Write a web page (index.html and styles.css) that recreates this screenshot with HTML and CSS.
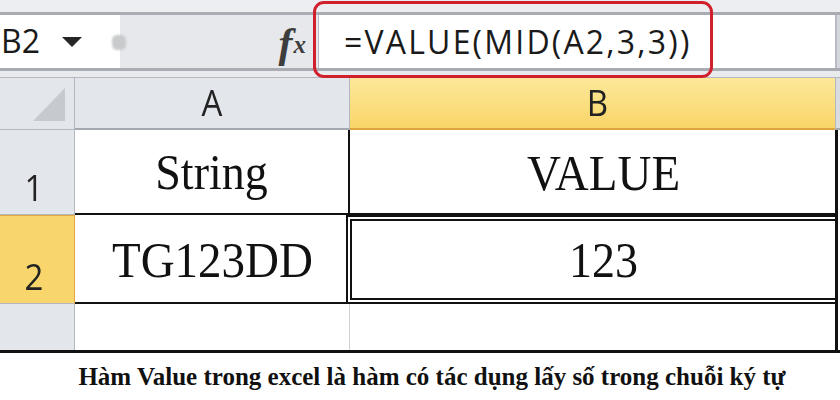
FILE: index.html
```html
<!DOCTYPE html>
<html lang="vi">
<head>
<meta charset="utf-8">
<title>Hàm VALUE</title>
<link rel="stylesheet" href="styles.css">
</head>
<body>
<div class="app">
  <div class="chrome-top"></div>

  <div class="formula-row">
    <div class="name-box">
      <span class="cell-ref">B2</span>
      <span class="caret"></span>
    </div>
    <div class="grip"></div>
    <div class="fx-area">
      <span class="fx"><span class="fx-f">f</span><span class="fx-x">x</span></span>
    </div>
    <div class="formula">=VALUE(MID(A2,3,3))</div>
    <div class="formula-end"></div>
  </div>
  <div class="formula-foot"></div>

  <div class="sheet">
    <!-- header row -->
    <div class="corner"><span class="corner-tri"></span></div>
    <div class="col-head"><span class="tall">A</span></div>
    <div class="col-head active"><span class="tall">B</span></div>
    <div class="gutter head"></div>

    <!-- row 1 -->
    <div class="row-head"><span class="tall">1</span></div>
    <div class="cell a1"><span class="tall">String</span></div>
    <div class="cell b1"><span class="tall">VALUE</span></div>
    <div class="gutter"></div>

    <!-- row 2 -->
    <div class="row-head active"><span class="tall">2</span></div>
    <div class="cell a2"><span class="tall">TG123DD</span></div>
    <div class="cell b2"><span class="tall">123</span></div>
    <div class="gutter"></div>

    <!-- row 3 -->
    <div class="row-head last"></div>
    <div class="cell a3"></div>
    <div class="cell b3"></div>
    <div class="gutter"></div>
  </div>

  <p class="caption">Hàm Value trong excel là hàm có tác dụng lấy số trong chuỗi ký tự</p>

  <div class="callout"></div>
</div>
</body>
</html>
```

FILE: styles.css
```css
* {
  box-sizing: border-box;
}

html, body {
  margin: 0;
  padding: 0;
  background: #ffffff;
}

.app {
  position: relative;
  width: 840px;
  height: 400px;
  overflow: hidden;
  font-family: "Open Sans", "Noto Sans", sans-serif;
  color: #1f1f1f;
}

/* strip of the ribbon above the formula bar */
.chrome-top {
  height: 15px;
  background: #eceef1;
  border-bottom: 3px solid #a9adb3;
}

.formula-row {
  display: flex;
  height: 53px;
  background: #e6e8eb;
}

.name-box {
  width: 120px;
  background: #ffffff;
  display: flex;
  align-items: center;
  padding-left: 1px;
}

.cell-ref {
  font-size: 32px;
  line-height: 1;
  color: #1a1a1a;
  margin-top: -2px;
}

.caret {
  width: 0;
  height: 0;
  margin-left: 22px;
  margin-top: 1px;
  border-left: 10px solid transparent;
  border-right: 10px solid transparent;
  border-top: 10px solid #262626;
}

/* splitter handle between name box and formula */
.grip {
  width: 14px;
  height: 15px;
  margin: 20px 0 0 -8px;
  border-radius: 5px;
  background: #c9cacc;
  filter: blur(1.2px);
}

.fx-area {
  flex: 1;
  display: flex;
  justify-content: flex-end;
  align-items: center;
  padding-right: 12px;
}

.fx {
  display: flex;
  align-items: flex-end;
  font-family: "Liberation Serif", serif;
  font-style: italic;
  font-weight: bold;
  color: #3d3d3d;
  margin-top: 2px;
}

.fx-f {
  font-size: 42px;
  line-height: 1;
}

.fx-x {
  font-size: 25px;
  line-height: 1;
  margin-left: 1px;
  margin-bottom: 7px;
}

.formula {
  width: 517px;
  background: #ffffff;
  border-left: 1px solid #b9bdc3;
  display: flex;
  align-items: center;
  padding-left: 25px;
  font-size: 32px;
  letter-spacing: 2.2px;
  color: #1a1a1a;
  line-height: 1;
}

.formula-end {
  width: 5px;
  background: #d4d7db;
  border-left: 2px solid #b9bdc3;
}

.formula-foot {
  height: 10px;
  background: #e8eaed;
  border-top: 3px solid #a9adb3;
  border-bottom: 1px solid #b5b9bf;
}

/* worksheet grid */
.sheet {
  display: grid;
  grid-template-columns: 75px 275px 485px 5px;
  grid-template-rows: 52px 85px 89px 46px;
  border-bottom: 3px solid #111111;
}

/* glyphs in the sheet are a little taller than they are wide */
.tall {
  display: inline-block;
  transform: scaleY(1.1);
}

.corner,
.col-head,
.row-head {
  background: #e3e6ea;
  font-size: 33px;
  line-height: 1;
  color: #222222;
  border-right: 1px solid #b3b8be;
  border-bottom: 1px solid #b3b8be;
}

.corner {
  position: relative;
}

.corner-tri {
  position: absolute;
  right: 9px;
  bottom: 8px;
  width: 32px;
  height: 33px;
  background: #c6cacf;
  clip-path: polygon(100% 0, 100% 100%, 0 100%);
}

.col-head {
  display: flex;
  justify-content: center;
  align-items: flex-end;
  padding-bottom: 9px;
  border-bottom: 2px solid #a4a9b0;
}

.col-head.active {
  background: linear-gradient(#fde89a, #f9d568);
  border-bottom: 2px solid #dfa63f;
  border-right: none;
  padding-left: 10px;
}

.gutter {
  background: #ffffff;
  border-left: 3px solid #111111;
}

.gutter.head {
  background: #d9dce0;
  border-left: 1px solid #b3b8be;
  border-bottom: 2px solid #a4a9b0;
}

.row-head {
  display: flex;
  justify-content: center;
  align-items: flex-end;
  padding-bottom: 10px;
  padding-right: 6px;
}

.row-head.active {
  background: #f9d66c;
  border-right: 1px solid #e0a843;
  border-top: 1px solid #e0a843;
}

.row-head.last {
  border-bottom: none;
}

.cell {
  background: #ffffff;
  display: flex;
  justify-content: center;
  align-items: center;
  font-family: "Liberation Serif", "Times New Roman", serif;
  font-size: 46px;
  line-height: 1;
  color: #111111;
}

.a1 {
  border-right: 2px solid #111111;
  border-bottom: 2px solid #111111;
  padding-top: 2px;
}

.b1 {
  border-bottom: 2px solid #111111;
  padding-top: 2px;
  padding-left: 22px;
  font-size: 47px;
}

.a2 {
  border-bottom: 2px solid #111111;
  padding-top: 2px;
  font-size: 47px;
}

.b2 {
  margin-left: -4px;
  border: 6px double #111111;
  border-right: none;
  padding-top: 2px;
  padding-left: 20px;
}

.a3 {
  border-right: 1px solid #d2d2d2;
}

.caption {
  margin: 0;
  height: 47px;
  display: flex;
  justify-content: center;
  align-items: center;
  padding-left: 24px;
  font-family: "Liberation Serif", "Times New Roman", serif;
  font-weight: bold;
  font-size: 25px;
  color: #111111;
}

/* red highlight drawn around the formula */
.callout {
  position: absolute;
  left: 313px;
  top: 1px;
  width: 400px;
  height: 77px;
  border: 3px solid #d0202c;
  border-radius: 11px;
}
```
